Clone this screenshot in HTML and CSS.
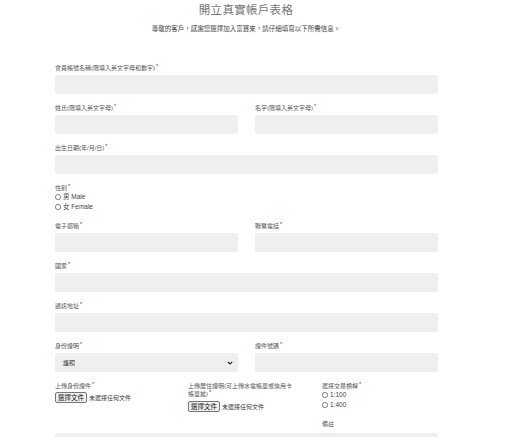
FILE: index.html
```html
<!DOCTYPE html>
<html lang="zh-Hant">
<head>
<meta charset="utf-8">
<title>開立真實帳戶表格</title>
<link rel="stylesheet" href="styles.css">
</head>
<body>
<div class="page">
  <header class="head">
    <h1 class="title">開立真實帳戶表格</h1>
    <p class="intro">尊敬的客戶，感謝您選擇加入富寶來，請仔細填寫以下所需信息。</p>
  </header>
  <form class="form">
    <div class="field">
      <div class="label">會員帳號名稱(限填入英文字母和數字)<span class="req">*</span></div>
      <div class="input"></div>
    </div>
    <div class="row2">
      <div class="field">
        <div class="label">姓氏(限填入英文字母)<span class="req">*</span></div>
        <div class="input"></div>
      </div>
      <div class="field">
        <div class="label">名字(限填入英文字母)<span class="req">*</span></div>
        <div class="input"></div>
      </div>
    </div>
    <div class="field">
      <div class="label">出生日期(年/月/日)<span class="req">*</span></div>
      <div class="input"></div>
    </div>
    <div class="field gender">
      <div class="label">性别<span class="req">*</span></div>
      <div class="radio"><span class="dot"></span>男 Male</div>
      <div class="radio"><span class="dot"></span>女 Female</div>
    </div>
    <div class="row2">
      <div class="field">
        <div class="label">電子郵箱<span class="req">*</span></div>
        <div class="input"></div>
      </div>
      <div class="field">
        <div class="label">聯繫電話<span class="req">*</span></div>
        <div class="input"></div>
      </div>
    </div>
    <div class="field">
      <div class="label">國家<span class="req">*</span></div>
      <div class="input"></div>
    </div>
    <div class="field">
      <div class="label">通訊地址<span class="req">*</span></div>
      <div class="input"></div>
    </div>
    <div class="row2">
      <div class="field">
        <div class="label">身份證明<span class="req">*</span></div>
        <div class="input select"><span>護照</span>
          <svg class="chev" width="6" height="4" viewBox="0 0 6 4"><path d="M0.8 0.8 L3 3 L5.2 0.8" fill="none" stroke="#222" stroke-width="1.1"/></svg>
        </div>
      </div>
      <div class="field">
        <div class="label">證件號碼<span class="req">*</span></div>
        <div class="input"></div>
      </div>
    </div>
    <div class="row3">
      <div class="col">
        <div class="label">上傳身份證件<span class="req">*</span></div>
        <div class="file"><span class="fbtn">選擇文件</span><span class="fname">未選擇任何文件</span></div>
      </div>
      <div class="col mid">
        <div class="label wrap"><span class="line">上傳居住證明(可上傳水電帳單或信用卡</span><span class="line">帳單據)<span class="req">*</span></span></div>
        <div class="file"><span class="fbtn">選擇文件</span><span class="fname">未選擇任何文件</span></div>
      </div>
      <div class="col lev">
        <div class="label">選擇交易槓桿<span class="req">*</span></div>
        <div class="radio"><span class="dot"></span>1:100</div>
        <div class="radio"><span class="dot"></span>1:400</div>
      </div>
    </div>
    <div class="row3 note">
      <div class="col"></div>
      <div class="col"></div>
      <div class="col"><div class="label">備註</div></div>
    </div>
    <div class="input area"></div>
  </form>
</div>
</body>
</html>
```
FILE: styles.css
```css
html, body {
  margin: 0;
  padding: 0;
  background: #fff;
}
body {
  font-family: "Liberation Sans", "Noto Sans CJK TC", sans-serif;
  color: #444;
  overflow: hidden;
  height: 437px;
}
.page {
  width: 492px;
}
.head {
  text-align: center;
}
.title {
  margin: 0;
  padding-top: 3px;
  font-size: 11.5px;
  line-height: 15px;
  font-weight: normal;
  color: #777;
  letter-spacing: 0.3px;
}
.intro {
  margin: 7px 0 0;
  font-size: 6.5px;
  line-height: 8px;
  color: #444;
}
.form {
  margin: 31px 0 0 55px;
  width: 383px;
  display: flex;
  flex-direction: column;
  gap: 10px;
}
.field {
  display: flex;
  flex-direction: column;
}
.label {
  font-size: 6px;
  line-height: 8px;
  color: #555;
  white-space: nowrap;
}
.req {
  color: #d0202a;
  font-size: 6px;
  vertical-align: 2px;
  line-height: 0;
  margin-left: 1px;
}
.input {
  margin-top: 3px;
  height: 19px;
  background: #efefef;
  border-radius: 2px;
}
.row2 {
  display: grid;
  grid-template-columns: 183px 183px;
  column-gap: 17px;
}
.radio {
  display: flex;
  align-items: center;
  font-size: 6.5px;
  line-height: 10px;
  height: 10px;
  color: #444;
}
.dot {
  width: 3.5px;
  height: 3.5px;
  border: 0.7px solid #777;
  border-radius: 50%;
  margin-right: 2.5px;
  background: #fff;
}
.select {
  display: flex;
  align-items: center;
  justify-content: space-between;
  padding: 0 5px 0 8px;
  font-size: 6px;
  color: #333;
}
.chev {
  display: block;
}
.row3 {
  display: grid;
  grid-template-columns: 133px 134px 116px;
}
.col {
  display: flex;
  flex-direction: column;
}
.label.wrap {
  white-space: nowrap;
  display: flex;
  flex-direction: column;
}
.line {
  display: block;
  height: 8px;
}
.mid .file {
  margin-top: 3px;
}
.lev .radio:first-of-type {
  margin-top: 1px;
}
.file {
  display: flex;
  align-items: center;
  margin-top: 2px;
  font-size: 6.5px;
  line-height: 8px;
}
.fbtn {
  border: 1px solid #767676;
  background: #efefef;
  border-radius: 2px;
  padding: 0 2px;
  height: 9px;
  line-height: 9px;
  color: #111;
  font-size: 6.5px;
}
.fname {
  margin-left: 2px;
  color: #333;
  font-size: 6px;
}
.note {
  margin-top: -2px;
}
.area {
  margin-top: -5px;
  height: 19px;
}
```
